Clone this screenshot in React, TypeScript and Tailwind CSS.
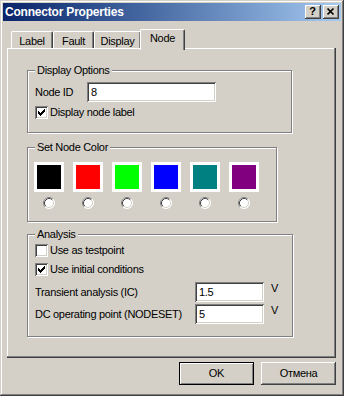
import React from "react";

const raised =
  "shadow-[inset_-1px_-1px_0_#404040,inset_1px_1px_0_#ffffff,inset_-2px_-2px_0_#808080,inset_2px_2px_0_#d4d0c8]";
const sunken =
  "shadow-[inset_1px_1px_0_#808080,inset_-1px_-1px_0_#ffffff,inset_2px_2px_0_#404040,inset_-2px_-2px_0_#d4d0c8]";

function Group({
  title,
  className,
  children,
}: {
  title: string;
  className: string;
  children: React.ReactNode;
}) {
  return (
    <div
      className={
        "relative border border-[#808080] shadow-[1px_1px_0_#ffffff,inset_1px_1px_0_#ffffff] " +
        className
      }
    >
      <span className="absolute -top-[7px] left-[7px] px-[2px] bg-[#d4d0c8] leading-[13px]">
        {title}
      </span>
      {children}
    </div>
  );
}

function Check({ checked }: { checked?: boolean }) {
  return (
    <span
      className={
        "w-[13px] h-[13px] shrink-0 bg-white flex items-center justify-center " +
        sunken
      }
    >
      {checked && (
        <svg width="7" height="7" viewBox="0 0 7 7" shapeRendering="crispEdges">
          <polygon points="0,2 2,4 6,0 7,0 7,3 2.5,7 2,7 0,5" fill="#000" />
        </svg>
      )}
    </span>
  );
}

function Radio() {
  return (
    <svg width="12" height="12" viewBox="0 0 12 12">
      <circle cx="6" cy="6" r="5.5" fill="#ffffff" />
      <path d="M2.11 9.89 A5.5 5.5 0 0 1 9.89 2.11" stroke="#808080" strokeWidth="1" fill="none" />
      <path d="M9.89 2.11 A5.5 5.5 0 0 1 2.11 9.89" stroke="#ffffff" strokeWidth="1" fill="none" />
      <path d="M2.82 9.18 A4.5 4.5 0 0 1 9.18 2.82" stroke="#404040" strokeWidth="1" fill="none" />
      <path d="M9.18 2.82 A4.5 4.5 0 0 1 2.82 9.18" stroke="#d4d0c8" strokeWidth="1" fill="none" />
    </svg>
  );
}

function Input({ value, className }: { value: string; className: string }) {
  return (
    <div
      className={
        "h-[20px] bg-white flex items-center pl-[4px] shrink-0 " + sunken + " " + className
      }
    >
      {value}
    </div>
  );
}

const colors = ["#000000", "#ff0000", "#00ff00", "#0000ff", "#008080", "#800080"];

export default function App() {
  return (
    <div className="w-[344px] h-[396px] bg-[#d4d0c8] p-[3px] shadow-[inset_-1px_-1px_0_#404040,inset_1px_1px_0_#d4d0c8,inset_-2px_-2px_0_#808080,inset_2px_2px_0_#ffffff] font-['Liberation_Sans',Arial,sans-serif] text-[11px] tracking-[-0.3px] leading-[13px] text-black">
      {/* Title bar */}
      <div className="h-[18px] flex items-center bg-linear-to-r from-[#0a246a] to-[#a6caf0] pl-[2px] pr-[2px]">
        <span className="flex-1 text-white font-bold text-[12px] tracking-[-0.2px]">
          Connector Properties
        </span>
        <div
          className={
            "w-[16px] h-[14px] bg-[#d4d0c8] flex items-center justify-center font-bold text-[11px] tracking-normal " +
            raised
          }
        >
          <span className="-mt-[1px] -ml-[1px]">?</span>
        </div>
        <div
          className={
            "ml-[2px] w-[16px] h-[14px] bg-[#d4d0c8] flex items-center justify-center " + raised
          }
        >
          <svg width="16" height="14" viewBox="0 0 16 14">
            <path d="M4.5 3.5 L10.5 9.5 M10.5 3.5 L4.5 9.5" stroke="#000" strokeWidth="1.7" />
          </svg>
        </div>
      </div>

      <div className="ml-[4px] w-[329px] mt-[8px]">
        {/* Tabs */}
        <div className="flex items-end pl-[4px]">
          <div className="w-[42px] h-[17px] border-l border-t border-r border-l-white border-t-white border-r-[#404040] rounded-t-[2px] shadow-[inset_-1px_0_0_#808080] flex items-center justify-center pt-[2px]">
            Label
          </div>
          <div className="w-[41px] h-[17px] border-l border-t border-r border-l-white border-t-white border-r-[#404040] rounded-t-[2px] shadow-[inset_-1px_0_0_#808080] flex items-center justify-center pt-[2px]">
            Fault
          </div>
          <div className="w-[47px] h-[17px] border-l border-t border-r border-l-white border-t-white border-r-[#404040] rounded-t-[2px] shadow-[inset_-1px_0_0_#808080] flex items-center justify-center pt-[2px]">
            Display
          </div>
          <div className="relative z-10 -ml-[1px] -mb-[2px] w-[45px] h-[21px] bg-[#d4d0c8] border-l border-t border-r border-l-white border-t-white border-r-[#404040] rounded-t-[2px] shadow-[inset_-1px_0_0_#808080] flex items-start justify-center pt-[2px]">
            Node
          </div>
        </div>

        {/* Panel */}
        <div className="h-[310px] flex flex-col pt-[22px] pl-[20px] shadow-[inset_-1px_-1px_0_#404040,inset_-2px_-2px_0_#808080,inset_1px_1px_0_#ffffff]">
          <Group title="Display Options" className="w-[265px] h-[63px] pl-[7px] pt-[11px]">
            <div className="flex items-center">
              <span className="w-[52px]">Node ID</span>
              <Input value="8" className="w-[129px]" />
            </div>
            <div className="flex items-center gap-[2px] mt-[4px]">
              <Check checked />
              <span>Display node label</span>
            </div>
          </Group>

          <Group title="Set Node Color" className="mt-[14px] w-[250px] h-[75px] pl-[6px] pt-[14px]">
            <div className="flex gap-[9px]">
              {colors.map((c) => (
                <div key={c} className="flex flex-col items-center gap-[5px]">
                  <div
                    className="w-[30px] h-[30px] border-[3px] border-white"
                    style={{ backgroundColor: c }}
                  />
                  <Radio />
                </div>
              ))}
            </div>
          </Group>

          <Group title="Analysis" className="mt-[12px] w-[266px] h-[103px] pl-[7px] pt-[9px]">
            <div className="flex items-center gap-[2px]">
              <Check />
              <span>Use as testpoint</span>
            </div>
            <div className="flex items-center gap-[2px] mt-[6px]">
              <Check checked />
              <span>Use initial conditions</span>
            </div>
            <div className="flex items-center mt-[6px]">
              <span className="w-[160px]">Transient analysis (IC)</span>
              <Input value="1.5" className="w-[69px]" />
              <span className="ml-[7px] self-start">V</span>
            </div>
            <div className="flex items-center mt-[2px]">
              <span className="w-[160px]">DC operating point (NODESET)</span>
              <Input value="5" className="w-[69px]" />
              <span className="ml-[7px] self-start">V</span>
            </div>
          </Group>
        </div>

        {/* Buttons */}
        <div className="flex justify-end gap-[7px] mt-[4px]">
          <div className="w-[75px] h-[23px] border border-black shadow-[inset_1px_1px_0_#ffffff,inset_-1px_-1px_0_#808080] flex items-center justify-center">
            OK
          </div>
          <div
            className={"w-[75px] h-[23px] flex items-center justify-center " + raised}
          >
            Отмена
          </div>
        </div>
      </div>
    </div>
  );
}
